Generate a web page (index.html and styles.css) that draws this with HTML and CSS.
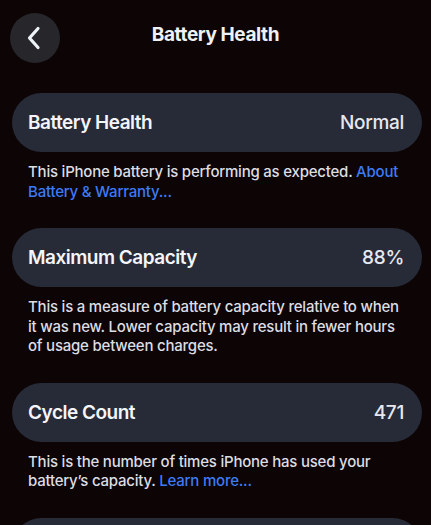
FILE: index.html
```
<!DOCTYPE html>
<html>
<head>
<meta charset="utf-8">
<link rel="stylesheet" href="styles.css">
</head>
<body>
<div class="screen">
  <header class="nav">
    <div class="back">
      <svg width="16" height="24" viewBox="0 0 16 24"><path d="M12 2.5 L3.5 12 L12 21.5" fill="none" stroke="#eef3f7" stroke-width="3.2" stroke-linecap="round" stroke-linejoin="round"/></svg>
    </div>
    <div class="title">Battery Health</div>
  </header>
  <main class="list">
    <section class="group">
      <div class="card"><span class="label">Battery Health</span><span class="value">Normal</span></div>
      <p class="desc">This iPhone battery is performing as expected. <span class="link">About Battery &amp; Warranty...</span></p>
    </section>
    <section class="group">
      <div class="card"><span class="label">Maximum Capacity</span><span class="value">88%</span></div>
      <p class="desc">This is a measure of battery capacity relative to when it was new. Lower capacity may result in fewer hours of usage between charges.</p>
    </section>
    <section class="group">
      <div class="card"><span class="label">Cycle Count</span><span class="value">471</span></div>
      <p class="desc">This is the number of times iPhone has used your battery’s capacity. <span class="link">Learn more...</span></p>
    </section>
    <section class="group last">
      <div class="card"></div>
    </section>
  </main>
</div>
</body>
</html>
```
FILE: styles.css
```
html, body {
  margin: 0;
  padding: 0;
  background: #0c0405;
  overflow: hidden;
}
body {
  width: 431px;
  height: 525px;
  font-family: Inter, "Noto Sans", "Liberation Sans", sans-serif;
  color: #f2f3f7;
}
.screen {
  width: 431px;
  height: 525px;
  overflow: hidden;
}
.nav {
  position: relative;
  height: 93px;
}
.back {
  position: absolute;
  left: 10px;
  top: 13px;
  width: 50px;
  height: 50px;
  border-radius: 50%;
  background: #26262b;
  display: flex;
  align-items: center;
  justify-content: center;
  padding-right: 3px;
  box-sizing: border-box;
}
.title {
  position: absolute;
  left: 0;
  right: 0;
  top: 23px;
  text-align: center;
  font-size: 19px;
  font-weight: 700;
  letter-spacing: -0.4px;
  color: #eef1f6;
}
.list {
  display: flex;
  flex-direction: column;
}
.group {
  margin: 0 9px 0 12px;
  padding-bottom: 27px;
}
.card {
  height: 59px;
  border-radius: 30px;
  background: #272a37;
  display: flex;
  align-items: center;
  justify-content: space-between;
  padding: 0 18px 0 16px;
  box-sizing: border-box;
}
.label {
  font-size: 19px;
  font-weight: 600;
  letter-spacing: -0.5px;
  color: #f4f5f9;
}
.value {
  font-size: 19px;
  font-weight: 500;
  letter-spacing: -0.3px;
  color: #e6e8ef;
}
.desc {
  margin: 0;
  padding: 10px 14px 0 16px;
  font-size: 15px;
  line-height: 19.5px;
  font-weight: 500;
  letter-spacing: -0.22px;
  color: #dcdde3;
}
.link {
  color: #3d7bf5;
}
```
